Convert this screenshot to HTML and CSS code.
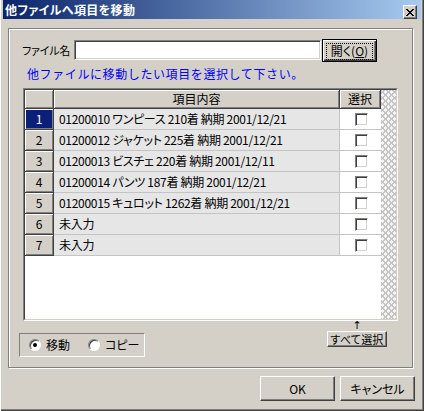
FILE: index.html
```html
<!DOCTYPE html>
<html lang="ja">
<head>
<meta charset="utf-8">
<title>他ファイルへ項目を移動</title>
<link rel="stylesheet" href="styles.css">
</head>
<body>
<div class="window">
  <div class="titlebar">
    <span class="title">他ファイルへ項目を移動</span>
    <span class="close-btn">
      <svg width="8" height="7" viewBox="0 0 8 7" shape-rendering="crispEdges">
        <rect x="0" y="0" width="2" height="1"/><rect x="6" y="0" width="2" height="1"/>
        <rect x="1" y="1" width="2" height="1"/><rect x="5" y="1" width="2" height="1"/>
        <rect x="2" y="2" width="4" height="1"/>
        <rect x="3" y="3" width="2" height="1"/>
        <rect x="2" y="4" width="4" height="1"/>
        <rect x="1" y="5" width="2" height="1"/><rect x="5" y="5" width="2" height="1"/>
        <rect x="0" y="6" width="2" height="1"/><rect x="6" y="6" width="2" height="1"/>
      </svg>
    </span>
  </div>
  <div class="frame">
    <div class="file-row">
      <span class="file-label">ファイル名</span>
      <input type="text" class="file-input">
      <button class="btn btn-default"><span class="btn-focus">開く(<u>O</u>)</span></button>
    </div>
    <div class="hint">他ファイルに移動したい項目を選択して下さい。</div>
    <div class="grid">
      <div class="grid-inner">
        <div class="grid-body">
          <div class="grid-row grid-head">
            <div class="cell raised"></div>
            <div class="cell raised">項目内容</div>
            <div class="cell raised">選択</div>
          </div>
          <div class="grid-row">
            <div class="cell raised rowhead selected">1</div>
            <div class="cell content">01200010 ワンピース 210着 納期 2001/12/21</div>
            <div class="cell check"><span class="checkbox"></span></div>
          </div>
          <div class="grid-row">
            <div class="cell raised rowhead">2</div>
            <div class="cell content">01200012 ジャケット 225着 納期 2001/12/21</div>
            <div class="cell check"><span class="checkbox"></span></div>
          </div>
          <div class="grid-row">
            <div class="cell raised rowhead">3</div>
            <div class="cell content">01200013 ビスチェ 220着 納期 2001/12/11</div>
            <div class="cell check"><span class="checkbox"></span></div>
          </div>
          <div class="grid-row">
            <div class="cell raised rowhead">4</div>
            <div class="cell content">01200014 パンツ 187着 納期 2001/12/21</div>
            <div class="cell check"><span class="checkbox"></span></div>
          </div>
          <div class="grid-row">
            <div class="cell raised rowhead">5</div>
            <div class="cell content">01200015 キュロット 1262着 納期 2001/12/21</div>
            <div class="cell check"><span class="checkbox"></span></div>
          </div>
          <div class="grid-row">
            <div class="cell raised rowhead">6</div>
            <div class="cell content">未入力</div>
            <div class="cell check"><span class="checkbox"></span></div>
          </div>
          <div class="grid-row">
            <div class="cell raised rowhead">7</div>
            <div class="cell content">未入力</div>
            <div class="cell check"><span class="checkbox"></span></div>
          </div>
        </div>
        <div class="grid-hatch"></div>
      </div>
    </div>
    <div class="bottom-row">
      <div class="radio-group">
        <label class="radio"><span class="radio-dot checked"></span>移動</label>
        <label class="radio"><span class="radio-dot"></span>コピー</label>
      </div>
      <div class="select-all">
        <span class="arrow">↑</span>
        <button class="btn btn-small">すべて選択</button>
      </div>
    </div>
  </div>
  <div class="actions">
    <button class="btn btn-action">OK</button>
    <button class="btn btn-action">キャンセル</button>
  </div>
</div>
</body>
</html>
```

FILE: styles.css
```css
html, body {
  margin: 0;
  padding: 0;
  background: #d4d0c8;
}

body {
  font-family: "Noto Sans CJK JP", "Liberation Sans", sans-serif;
  font-size: 12px;
  font-feature-settings: "palt";
  color: #000;
}

.window {
  box-sizing: border-box;
  width: 424px;
  height: 411px;
  padding: 0 3px 3px 3px;
  background: #d4d0c8;
  box-shadow: inset 1px 0 #fff, inset -1px -1px #404040, inset -2px -2px #808080;
  display: flex;
  flex-direction: column;
}

.titlebar {
  height: 19px;
  flex: none;
  display: flex;
  align-items: flex-start;
  justify-content: space-between;
  background: linear-gradient(to right, #0a246a, #a6caf0);
}

.title {
  color: #fff;
  font-weight: bold;
  line-height: 19px;
  padding-left: 2px;
  letter-spacing: 0.4px;
}

.close-btn {
  box-sizing: border-box;
  width: 14px;
  height: 14px;
  margin: 5px 4px 0 0;
  background: #d4d0c8;
  border: 1px solid;
  border-color: #fff #404040 #404040 #fff;
  box-shadow: inset -1px -1px #808080;
  display: flex;
  align-items: center;
  justify-content: center;
}

.close-btn svg {
  display: block;
  fill: #000;
}

.frame {
  box-sizing: border-box;
  flex: none;
  width: 405px;
  height: 340px;
  margin: 9px 0 0 5px;
  border: 1px solid #808080;
  box-shadow: inset 1px 1px #fff, 1px 1px #fff;
}

.file-row {
  display: flex;
  align-items: flex-start;
  height: 23px;
  margin: 10px 0 0 13px;
}

.file-label {
  flex: none;
  width: 52px;
  white-space: nowrap;
  font-size: 11px;
  line-height: 22px;
  letter-spacing: -0.2px;
}

.file-input {
  flex: none;
  box-sizing: border-box;
  width: 247px;
  height: 20px;
  margin: 1px 0 0 0;
  padding: 0;
  background: #fff;
  border: 1px solid;
  border-color: #808080 #fff #fff #808080;
  box-shadow: inset 1px 1px #404040, inset -1px -1px #d4d0c8;
  outline: none;
}

.btn {
  box-sizing: border-box;
  padding: 0;
  font: inherit;
  font-feature-settings: "palt";
  white-space: nowrap;
  color: #000;
  background: #d4d0c8;
  border: 1px solid;
  border-color: #fff #404040 #404040 #fff;
  box-shadow: inset -1px -1px #808080;
  cursor: default;
}

.btn-default {
  flex: none;
  width: 55px;
  height: 23px;
  margin-left: 1px;
  border: 1px solid #000;
  box-shadow: inset 1px 1px #fff, inset -1px -1px #404040, inset -2px -2px #808080;
  padding: 3px;
}

.btn-focus {
  display: block;
  height: 15px;
  line-height: 14px;
  border: 1px dotted #000;
  text-align: center;
}

.hint {
  margin: 4px 0 0 18px;
  line-height: 16px;
  color: #0000ff;
  font-feature-settings: normal;
  letter-spacing: 0.6px;
  white-space: nowrap;
}

.grid {
  box-sizing: border-box;
  width: 375px;
  height: 233px;
  margin: 6px 0 0 14px;
  border: 1px solid;
  border-color: #808080 #fff #fff #808080;
}

.grid-inner {
  box-sizing: border-box;
  height: 100%;
  border: 1px solid;
  border-color: #404040 #d4d0c8 #d4d0c8 #404040;
  display: flex;
}

.grid-body {
  flex: 1;
  background: #fff;
}

.grid-hatch {
  width: 15px;
  flex: none;
  background-color: #f4f4f4;
  background-image:
    repeating-linear-gradient(45deg, #c4c4c4 0 1px, transparent 1px 4.24px),
    repeating-linear-gradient(-45deg, #c4c4c4 0 1px, transparent 1px 4.24px);
}

.grid-row {
  display: grid;
  grid-template-columns: 29px 286px 41px;
  height: 21px;
}

.grid-head {
  height: 19px;
}

.cell {
  box-sizing: border-box;
  white-space: nowrap;
  overflow: hidden;
}

.raised {
  background: #d4d0c8;
  border-right: 1px solid #404040;
  border-bottom: 1px solid #404040;
  box-shadow: inset 1px 1px #fff, inset -1px -1px #808080;
  text-align: center;
  line-height: 18px;
}

.rowhead {
  line-height: 20px;
}

.rowhead.selected {
  background: #0a1f78;
  color: #fff;
}

.content {
  background: #e6e6e6;
  border-right: 1px solid #c4c4c4;
  border-bottom: 1px solid #c4c4c4;
  padding-left: 5px;
  line-height: 20px;
  letter-spacing: -0.3px;
}

.check {
  background: #fff;
  border-bottom: 1px solid #c4c4c4;
  display: flex;
  align-items: center;
  justify-content: center;
  padding-left: 1px;
}

.checkbox {
  box-sizing: border-box;
  width: 13px;
  height: 13px;
  background: #fff;
  border: 1px solid;
  border-color: #808080 #fff #fff #808080;
  box-shadow: inset 1px 1px #404040, inset -1px -1px #d4d0c8;
}

.bottom-row {
  display: flex;
  justify-content: space-between;
  align-items: flex-start;
  padding: 0 25px 0 10px;
}

.radio-group {
  box-sizing: border-box;
  width: 126px;
  height: 24px;
  margin-top: 12px;
  padding-left: 9px;
  border: 1px solid;
  border-color: #808080 #fff #fff #808080;
  display: flex;
  align-items: center;
}

.radio {
  display: flex;
  align-items: center;
  line-height: 14px;
}

.radio + .radio {
  margin-left: 18px;
}

.radio-dot {
  position: relative;
  box-sizing: border-box;
  width: 12px;
  height: 12px;
  margin-right: 5px;
  border-radius: 50%;
  background: #fff;
  border: 1px solid;
  border-color: #808080 #fff #fff #808080;
  box-shadow: inset 1px 1px #404040;
}

.radio-dot.checked::after {
  content: "";
  position: absolute;
  left: 3px;
  top: 3px;
  width: 4px;
  height: 4px;
  border-radius: 50%;
  background: #000;
}

.select-all {
  display: flex;
  flex-direction: column;
  align-items: center;
}

.arrow {
  line-height: 10px;
  height: 10px;
  font-size: 11px;
  font-family: "DejaVu Sans", sans-serif;
}

.btn-small {
  width: 60px;
  height: 16px;
  font-size: 11px;
  line-height: 13px;
  letter-spacing: 0.2px;
}

.actions {
  display: flex;
  justify-content: flex-end;
  gap: 5px;
  margin-top: 8px;
  padding-right: 6px;
}

.btn-action {
  width: 75px;
  height: 25px;
  line-height: 22px;
}
```
